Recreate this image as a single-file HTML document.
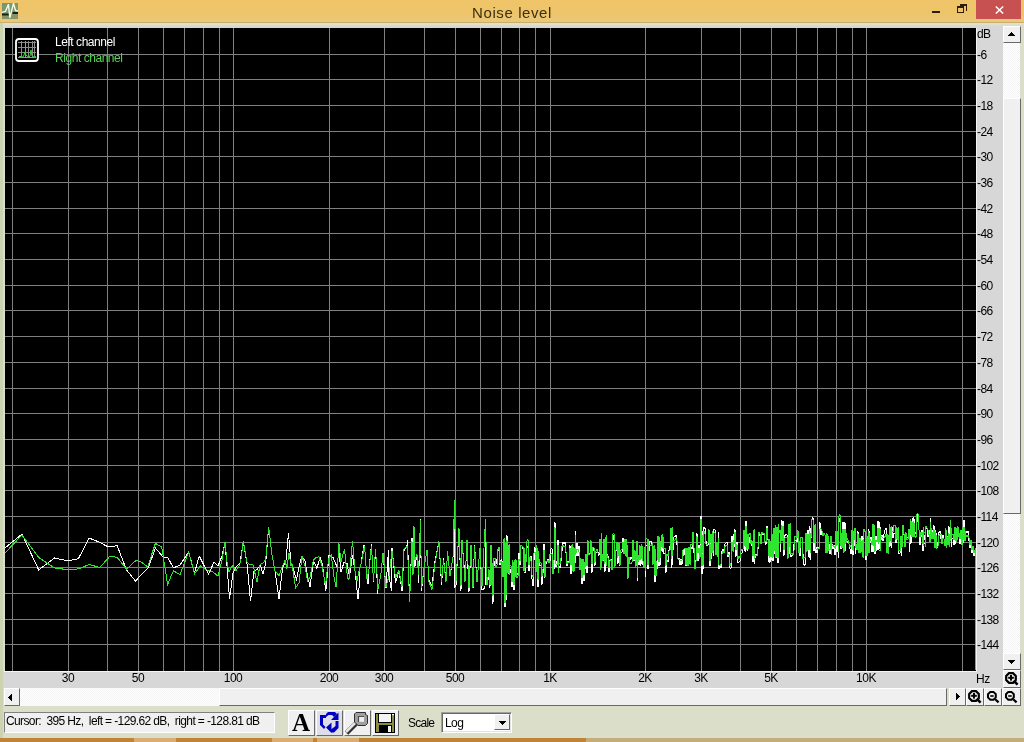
<!DOCTYPE html>
<html><head><meta charset="utf-8"><style>
html,body{margin:0;padding:0}
body{width:1024px;height:742px;overflow:hidden;position:relative;background:#dbdfca;font-family:"Liberation Sans",sans-serif;}
.abs{position:absolute}
.yl,.xl,.legend,#status,#ttext,.txt{will-change:transform}
#title{position:absolute;left:0;top:0;width:1024px;height:22px;background:linear-gradient(#f0c469,#eec46a 60%,#e9c97c)}
#ttext{position:absolute;left:0;width:1024px;top:4px;text-align:center;font-size:15px;letter-spacing:0.6px;color:#3a3010;line-height:17px}
#close{position:absolute;left:976px;top:0;width:45px;height:19px;background:#c75050}
#tline{position:absolute;left:0;top:22px;width:1024px;height:1px;background:#c6af6e}
#ctrl{position:absolute;left:3px;top:26px;width:1000px;height:662px;background:#d7d7d7}
.yl{position:absolute;left:977px;font-size:12px;line-height:12px;color:#000;white-space:nowrap;letter-spacing:-0.6px}
.xl{position:absolute;top:672px;width:60px;text-align:center;font-size:12px;line-height:12px;color:#000;letter-spacing:-0.5px}
.btn{position:absolute;box-sizing:border-box;background:#f0f0f0;border-style:solid;border-width:1px;border-color:#fff #696969 #696969 #fff}
.track{position:absolute;background-color:#f4f4f4;background-image:linear-gradient(45deg,#fff 25%,transparent 25%,transparent 75%,#fff 75%),linear-gradient(45deg,#fff 25%,transparent 25%,transparent 75%,#fff 75%);background-size:2px 2px;background-position:0 0,1px 1px}
.tri{position:absolute;width:0;height:0}
.legend{position:absolute;left:55px;font-size:12px;line-height:12px;white-space:nowrap;letter-spacing:-0.45px}
#status{position:absolute;left:4px;top:712px;width:271px;height:21px;box-sizing:border-box;background:#f0f0f0;border-style:solid;border-width:1px;border-color:#808080 #fff #fff #808080;font-size:12px;line-height:12px;white-space:pre;padding:2px 0 0 1px;color:#000;letter-spacing:-0.62px}
.tb{position:absolute;top:710px;width:27px;height:26px;box-sizing:border-box;background:#f0f0f0;border-style:solid;border-width:1px;border-color:#fff #696969 #696969 #fff}
</style></head><body>
<div id="title">
  <svg class="abs" style="left:2px;top:3px" width="16" height="16" viewBox="0 0 16 16">
    <rect x="0" y="0" width="16" height="16" fill="#7a9870"/>
    <rect x="0" y="11.5" width="16" height="4.5" fill="#8a946a"/>
    <rect x="0" y="10.5" width="7" height="2" fill="#142410"/>
    <rect x="10.5" y="9" width="5.5" height="2" fill="#142410"/>
    <polyline points="0,9.4 3.5,8.3 6.5,1.2 7.8,14.8 11.5,0.3 13.5,7.5 16,8" fill="none" stroke="#f4fbe8" stroke-width="1.4"/>
  </svg>
  <div id="ttext">Noise level</div>
  <div class="abs" style="left:932px;top:11px;width:8px;height:2px;background:#2a2008"></div>
  <div class="abs" style="left:957px;top:6px;width:7px;height:7px;box-sizing:border-box;border:1px solid #2a2008;border-top-width:2px"></div>
  <div class="abs" style="left:960px;top:4px;width:7px;height:7px;box-sizing:border-box;border-top:2px solid #2a2008;border-right:1px solid #2a2008"></div>
  <div id="close"><svg class="abs" style="left:19px;top:6px" width="9" height="8" viewBox="0 0 9 8"><path d="M0.8 0.5 L8.2 7.5 M8.2 0.5 L0.8 7.5" stroke="#fff" stroke-width="1.5"/></svg></div>
</div>
<div id="tline"></div>
<div class="abs" style="left:0;top:23px;width:1024px;height:1px;background:#ebe0b4"></div>
<div class="abs" style="left:0;top:24px;width:1024px;height:1px;background:#e2dec8"></div>
<div class="abs" style="left:0;top:25px;width:1024px;height:1px;background:#dad9d2"></div>
<div class="abs" style="left:0;top:23px;width:3px;height:715px;background:#cbd3b1"></div>
<div id="ctrl"></div>
<div class="abs" style="left:3px;top:26px;width:2px;height:646px;background:#dadfcc"></div>
<svg class="abs" style="left:0;top:0" width="1024" height="742">
  <rect x="5" y="28" width="971" height="643" fill="#000"/>
  <rect x="976" y="28" width="1" height="644" fill="#f4f4f4"/>
  <rect x="4" y="671" width="973" height="1" fill="#f4f4f4"/>
  <rect x="12" y="28" width="1" height="643" fill="#808080"/><rect x="68" y="28" width="1" height="643" fill="#808080"/><rect x="107" y="28" width="1" height="643" fill="#808080"/><rect x="138" y="28" width="1" height="643" fill="#808080"/><rect x="163" y="28" width="1" height="643" fill="#808080"/><rect x="184" y="28" width="1" height="643" fill="#808080"/><rect x="203" y="28" width="1" height="643" fill="#808080"/><rect x="219" y="28" width="1" height="643" fill="#808080"/><rect x="233" y="28" width="1" height="643" fill="#808080"/><rect x="329" y="28" width="1" height="643" fill="#808080"/><rect x="384" y="28" width="1" height="643" fill="#808080"/><rect x="424" y="28" width="1" height="643" fill="#808080"/><rect x="455" y="28" width="1" height="643" fill="#808080"/><rect x="480" y="28" width="1" height="643" fill="#808080"/><rect x="501" y="28" width="1" height="643" fill="#808080"/><rect x="519" y="28" width="1" height="643" fill="#808080"/><rect x="535" y="28" width="1" height="643" fill="#808080"/><rect x="550" y="28" width="1" height="643" fill="#808080"/><rect x="645" y="28" width="1" height="643" fill="#808080"/><rect x="701" y="28" width="1" height="643" fill="#808080"/><rect x="740" y="28" width="1" height="643" fill="#808080"/><rect x="771" y="28" width="1" height="643" fill="#808080"/><rect x="796" y="28" width="1" height="643" fill="#808080"/><rect x="817" y="28" width="1" height="643" fill="#808080"/><rect x="836" y="28" width="1" height="643" fill="#808080"/><rect x="852" y="28" width="1" height="643" fill="#808080"/><rect x="866" y="28" width="1" height="643" fill="#808080"/><rect x="962" y="28" width="1" height="643" fill="#808080"/><rect x="5" y="54" width="971" height="1" fill="#808080"/><rect x="5" y="79" width="971" height="1" fill="#808080"/><rect x="5" y="105" width="971" height="1" fill="#808080"/><rect x="5" y="131" width="971" height="1" fill="#808080"/><rect x="5" y="156" width="971" height="1" fill="#808080"/><rect x="5" y="182" width="971" height="1" fill="#808080"/><rect x="5" y="208" width="971" height="1" fill="#808080"/><rect x="5" y="233" width="971" height="1" fill="#808080"/><rect x="5" y="259" width="971" height="1" fill="#808080"/><rect x="5" y="285" width="971" height="1" fill="#808080"/><rect x="5" y="310" width="971" height="1" fill="#808080"/><rect x="5" y="336" width="971" height="1" fill="#808080"/><rect x="5" y="362" width="971" height="1" fill="#808080"/><rect x="5" y="388" width="971" height="1" fill="#808080"/><rect x="5" y="413" width="971" height="1" fill="#808080"/><rect x="5" y="439" width="971" height="1" fill="#808080"/><rect x="5" y="465" width="971" height="1" fill="#808080"/><rect x="5" y="490" width="971" height="1" fill="#808080"/><rect x="5" y="516" width="971" height="1" fill="#808080"/><rect x="5" y="542" width="971" height="1" fill="#808080"/><rect x="5" y="567" width="971" height="1" fill="#808080"/><rect x="5" y="593" width="971" height="1" fill="#808080"/><rect x="5" y="619" width="971" height="1" fill="#808080"/><rect x="5" y="644" width="971" height="1" fill="#808080"/>
  <polyline points="5,548 22,534 38.7,570 54.6,558 68,561 78.5,558.6 89,538 99,542 108.3,547 117.2,545.7 126.5,570 135.5,581 141,575 148.3,568 155.4,548 163,557 167.6,557 173.4,568 180,565 188.7,552 194.5,573 199.2,556 203.8,565 208.6,574 214,562 218,566 222,556 225,543 227,566 229.5,598.7 233,573 236,567 240,563 243.3,541.7 247,563.5 250.5,601 254,570.8 257,569.6 260.5,564.7 263,574.4 265.6,563.5 268.7,527 272,555 275,570.8 279,598.7 282.5,568.4 286,560 288.5,533.2 291,563.5 293,568.4 296.5,579.3 299.5,564.7 302,556.2 305,561 307.5,575.6 310,586.6 313.5,561 317,568.4 320,556.8 322.5,564.7 325.8,591.4 329,555 333,557.5 336.6,566 339,552.6 341,572 344,562.3 347,563.5 349.5,576.9 352.5,555 355,570.8 358,599 358.5,598.7 360,567 361,564 364,545 364.5,545.7 367,578.7 368,584 369,569.3 371.5,544.4 371.5,545.7 373.5,581.5 375.5,549 377.8,593.6 378,589.5 381,573.3 383,553.1 386,587.9 388.5,549.8 389,576 391.5,590.9 392,547.8 395.5,583.3 399,570.6 402,591.2 404,551.0 407,545 407.5,540.4 409.6,601.6 412,537.8 413,575 414,526 414,526 415,566.5 416,560 417,554.5 418.5,575 418.5,582.8 420.5,519.4 420.5,525.8 421.5,588 421.5,591 424,567.8 427,550 429,580.5 432,585.4 435,561.1 439,541.5 441.5,584.6 443.5,558.0 446,581.8 447.5,550.8 450,575.9 453,557 454.5,507.1 455,586.4 456,585.5 459,528.3 461,590.6 462,541.5 465,576.4 467,546.4 469,591.8 471,544.6 473,588 474.5,544.6 477,581.8 480,547.7 482,590.1 485,588 485.5,519 487,585 489,575.7 490,587.5 491,547.4 491,584.1 492,570.9 493,603.7 494,560.8 495,565.7 496,564.3 497,559.3 498,550.7 499,548.3 500,565.0 501,559.7 502,560.4 503,573.4 503,542.1 504,541.3 504,574.4 505,606.7 505,545.1 506,567.8 506,600.5 507,535.2 508,571.3 508,545.8 509,545.1 509,573.6 510,568.7 511,572.5 512,587.0 512,560.8 513,562.5 513,589.7 514,589.7 514,560.7 515,575.1 516,562.8 517,572.8 518,574.9 519,553.0 520,565.4 521,545.3 522,546.0 523,549.3 523,568.6 524,570.8 524,550.1 525,557.8 525,572.6 526,560.1 527,547.6 528,546.0 529,571.1 530,557.6 531,556.0 532,578.5 533,586.1 534,560.7 535,547.5 536,568.7 536,549.2 537,551.2 537,586.1 538,586.6 538,553.9 539,561.4 540,565.5 541,565.8 542,584.5 543,574.2 544,544.3 544,566.4 545,577.6 546,564.4 547,560.9 548,559.4 549,562.2 550,561.4 551,549.0 552,548.5 553,573.2 554,568.6 554,527.3 555,522.5 556,566.7 557,561.8 558,539.8 558,569.8 559,566.6 560,567.7 561,560.9 562,551.4 563,541.7 564,543.4 565,542.4 566,552.8 567,566.4 568,561.3 569,561.8 570,545.2 571,573.5 571,548.3 572,549.0 572,569.2 573,569.6 573,550.6 574,552.3 574,569.8 575,562.7 575,530.8 576,556.0 577,542.8 578,556.2 579,545.9 580,565.0 581,561.6 581,571.5 582,584.1 582,562.1 583,559.5 583,580.8 584,580.5 584,562.0 585,569.2 586,556.7 586,572.8 587,572.8 587,555.0 588,543.0 589,553.6 590,553.1 591,543.2 592,572.6 593,551.2 594,547.4 595,565.5 596,552.9 597,552.1 598,551.6 599,555.7 600,542.2 600,570.0 601,564.9 601,533.4 602,557.8 603,561.3 604,542.1 604,572.2 605,570.4 605,541.3 606,537.6 606,563.6 607,553.6 608,555.8 609,572.0 610,559.9 611,558.9 612,565.8 612,551.1 613,534.9 614,539.4 615,565.3 616,550.8 617,544.9 617,564.2 618,562.4 618,546.0 619,545.7 619,561.8 620,565.6 621,553.1 622,552.4 623,538.1 624,549.8 624,542.4 625,541.8 625,550.9 626,551.8 626,540.9 627,551.1 628,575.2 629,564.2 630,559.6 631,557.5 632,558.6 633,542.8 634,560.4 635,559.0 636,563.9 637,541.8 637,581.1 638,561.2 638,557.7 639,564.9 640,547.5 640,565.5 641,563.9 641,546.5 642,549.0 642,563.3 643,564.6 644,566.4 644,552.2 645,548.8 645,576.9 646,545.2 647,544.9 648,569.1 648,540.5 649,551.6 650,540.9 651,541.4 652,544.5 652,563.8 653,562.8 653,546.7 654,549.4 654,579.1 655,582.3 655,552.0 656,574.7 657,569.6 658,539.8 658,563.6 659,566.1 659,540.6 660,545.0 660,564.5 661,551.0 661,538.5 662,537.3 662,551.9 663,551.2 663,539.2 664,554.0 665,553.6 666,572.5 667,560.2 668,562.1 669,550.5 670,546.7 671,528.2 671,568.1 672,564.7 672,527.7 673,550.3 674,536.8 675,536.4 676,534.8 677,545.0 678,558.0 679,558.4 680,564.6 681,559.0 682,564.9 683,550.0 684,555.6 685,547.8 686,566.2 687,550.4 687,565.0 688,564.7 688,550.8 689,549.8 689,562.1 690,563.0 690,551.3 691,547.6 692,548.9 693,532.9 694,552.8 695,565.5 696,560.2 697,533.2 698,561.4 699,544.7 699,556.8 700,555.6 700,541.5 701,516.0 701,553.3 702,573.8 702,548.9 703,530.9 703,569.1 704,527.6 705,528.3 706,541.3 707,545.6 708,545.0 709,531.3 710,565.8 710,546.8 711,534.1 711,558.7 712,549.6 712,533.3 713,540.0 713,556.0 714,529.9 715,529.7 716,551.8 716,545.3 717,546.4 717,553.9 718,549.3 718,531.9 719,568.7 720,564.7 721,567.9 722,551.6 723,548.8 724,550.8 725,543.6 726,543.0 727,542.4 728,556.8 729,551.7 730,568.2 731,568.0 732,535.7 732,547.5 733,548.5 733,533.5 734,547.7 735,529.2 736,556.6 737,541.8 738,562.8 739,562.2 740,561.3 741,554.3 742,552.8 743,549.5 744,531.1 744,549.8 745,550.7 745,531.3 746,521.0 746,547.7 747,549.3 747,539.7 748,537.4 748,548.6 749,543.2 750,536.8 751,541.1 752,545.4 753,561.6 753,535.3 754,534.3 754,564.4 755,558.5 756,554.6 757,555.1 758,549.7 759,534.2 760,535.6 761,543.3 761,536.3 762,533.3 763,534.6 764,533.7 765,540.9 766,544.5 767,525.8 768,540.2 768,559.8 769,561.4 769,540.1 770,542.4 770,561.7 771,560.2 771,536.9 772,536.5 772,561.1 773,560.4 773,537.9 774,530.1 774,554.4 775,552.2 775,526.9 776,558.2 777,530.3 777,560.2 778,562.8 778,528.0 779,532.5 780,532.5 780,552.1 781,538.7 781,520.0 782,520.9 782,539.2 783,538.6 783,520.8 784,556.0 785,535.4 786,534.4 787,534.8 788,552.0 789,526.0 789,553.5 790,554.0 790,525.2 791,556.8 792,555.7 793,554.5 794,544.1 795,540.3 796,539.9 797,542.0 798,530.7 798,550.3 799,550.9 799,541.5 800,556.0 801,538.0 802,537.9 803,553.8 804,564.6 805,565.5 806,535.6 806,549.2 807,548.2 807,538.1 808,529.8 808,556.3 809,556.8 809,526.5 810,528.0 810,560.0 811,538.6 812,520.5 813,517.2 814,550.7 814,529.5 815,528.5 815,553.0 816,547.1 817,552.7 818,547.2 819,547.8 820,522.4 821,534.9 822,530.8 823,535.6 824,533.7 825,535.3 826,550.1 826,536.1 827,534.2 827,550.0 828,550.5 828,537.3 829,544.0 830,554.3 831,539.1 831,552.2 832,544.1 833,548.5 834,545.0 835,555.1 835,538.5 836,535.3 836,552.0 837,551.7 837,535.2 838,536.2 838,558.0 839,521.9 840,517.7 841,548.8 841,533.7 842,548.3 843,522.2 843,551.5 844,550.3 844,535.8 845,522.5 845,551.4 846,540.5 846,536.3 847,541.2 848,542.4 849,544.0 850,548.6 851,554.2 852,530.5 852,553.8 853,554.5 853,531.3 854,546.8 855,529.2 855,553.9 856,545.0 857,546.6 857,530.9 858,531.8 858,545.0 859,551.8 859,539.9 860,540.2 860,552.4 861,551.1 861,542.9 862,536.0 862,555.4 863,556.3 863,533.8 864,531.7 865,531.5 865,546.9 866,559.7 866,542.8 867,539.6 867,552.8 868,552.4 868,528.7 869,530.7 869,552.2 870,542.8 871,537.3 872,551.8 872,531.6 873,525.3 873,551.9 874,551.3 874,526.8 875,554.2 876,536.0 877,551.0 878,521.5 878,550.0 879,548.4 879,522.3 880,526.8 880,547.5 881,539.5 882,535.4 883,541.1 884,534.0 885,530.1 886,527.7 887,549.5 887,534.7 888,536.0 888,550.6 889,546.5 889,524.0 890,527.3 890,544.8 891,546.2 891,526.1 892,527.1 893,538.4 894,533.6 895,533.5 896,543.0 897,530.1 897,538.0 898,538.9 898,529.5 899,553.6 900,553.7 901,537.9 901,555.7 902,546.3 902,528.2 903,526.9 904,534.7 904,545.4 905,545.2 905,534.7 906,539.1 907,538.0 908,536.7 909,533.3 909,551.5 910,543.7 910,522.9 911,525.1 911,542.7 912,534.0 912,519.2 913,518.3 913,533.7 914,533.4 914,519.1 915,532.3 916,534.0 917,514.4 918,521.6 919,530.0 919,544.2 920,544.1 920,532.6 921,536.6 922,529.6 922,540.8 923,550.8 923,528.9 924,539.6 925,535.2 925,543.7 926,527.5 927,528.7 928,536.6 929,530.3 930,539.7 930,517.6 931,532.0 931,535.1 932,529.7 933,538.1 934,525.5 935,545.9 935,529.9 936,532.6 936,546.5 937,548.3 938,542.6 939,532.4 940,530.7 941,538.5 942,541.4 943,534.9 944,539.2 945,544.7 945,532.1 946,533.9 946,547.0 947,536.1 948,544.5 948,526.0 949,527.0 949,546.6 950,538.6 950,519.8 951,530.8 951,547.1 952,539.3 953,538.2 954,545.0 954,530.5 955,530.5 955,544.4 956,540.2 956,532.7 957,531.1 957,539.4 958,536.6 958,530.1 959,535.1 960,544.0 961,531.1 961,538.8 962,541.8 962,528.2 963,543.2 964,520.1 964,540.3 965,539.1 965,533.6 966,531.5 967,532.6 968,531.1 969,541 970,548 971,543 972,553 973,549 974,556 975,552" fill="none" stroke="#ffffff" stroke-width="1" shape-rendering="crispEdges"/>
<polyline points="5,553 22,535 38.7,557.4 54.6,568 70.3,570 80,568.5 89,564.4 99.6,567.5 110,556.2 117.2,557.4 126.5,569 136,560.5 141,562 147.6,566.8 155.4,543.4 161.7,547 167.6,584.4 173.4,570.8 180,574.5 188.7,552 194.5,573.8 200.4,566 207,570 213,572 218,576.2 222,560 225,542.3 227.4,566 229,572 233,564.7 236,570.8 240.5,563.5 243.3,541 247,562.3 250,564.7 253,564.7 257,582.3 260,564.7 263,563 265.6,560 268.7,527.1 272,555 275,570.8 279,575.6 282.5,566 285,560.5 287,568.4 289,552.6 291,566 292,563.5 295.5,587.8 299,583 302,556.2 305,566 307.5,581 310,576.9 313.5,560 316,557.5 319,556.8 322,566 325.5,585.4 328.6,558.7 331.4,555 333.7,575.6 336,587.2 339,543.5 341,561.7 344.5,549 347.5,578 349,579.3 352.5,541 355,570.8 357,580.5 360,567 361,564 364.5,545.7 367,578.7 369,569.3 371.5,545.7 373.5,581.4 375.5,549 378,589.5 381,573.3 383,553 386,586.8 389,576 392,551 395.5,577.4 399,570.6 402,586.8 404,549 407.5,546.4 409.6,601.6 412,541 413,575 414,526 415,560 417,554.5 418.5,575 420.5,519.6 421.5,588 424,567.8 427,550 429,581.8 432,589.5 435,563.2 439,541.5 441.5,581.8 443.5,560 446,581.8 447.5,550.8 450,575.6 453,557 454.5,500.4 456,581.8 459,528.3 461,586.4 462,540 465,581.8 467,540 469,588 471,544.6 473,588 474.5,546 477,581.8 480,547.7 482,586.4 485.5,519 487,585 489,569.4 490,584.7 491,545.1 491,584.8 492,562.5 493,596.4 494,558.3 495,558.0 496,566.9 497,565.6 498,549.5 499,547.0 500,562.7 501,561.4 502,562.1 503,576.9 503,540.1 504,539.3 504,577.9 505,603 505,542.6 506,566 506,595 507,540.1 508,572.9 508,545.7 509,545.0 509,575.2 510,565.5 511,565.9 512,581.9 512,560.1 513,561.7 513,584.6 514,584.6 514,560.0 515,577.1 516,559.4 517,578.4 518,576.3 519,559.0 520,561.3 521,545.1 522,545.8 523,546.8 523,569.1 524,571.3 524,547.7 525,553.9 525,567.6 526,562.1 527,540.8 528,539.2 529,565.3 530,556.6 531,561.3 532,575.2 533,577.3 534,552.8 535,551.9 536,572.4 536,545.6 537,547.8 537,578.4 538,579.0 538,550.5 539,559.3 540,562.8 541,563.0 542,576.6 543,569.1 544,550.1 544,567.9 545,577.4 546,561.2 547,561.5 548,560.0 549,562.8 550,554.3 551,554.0 552,553.5 553,574.0 554,559.8 554,534.0 555,527.1 556,564.0 557,565.0 558,544.6 558,572.9 559,563.1 560,564.2 561,558.1 562,546.4 563,545.3 564,546.9 565,546.0 566,551.7 567,563.6 568,562.1 569,562.7 570,547.6 571,564.7 571,546.2 572,545.2 572,570.6 573,571.0 573,546.8 574,548.4 574,571.2 575,554.6 575,534.7 576,552.6 577,548.8 578,549.5 579,552.0 580,569.9 581,558.5 581,566.7 582,577.9 582,561.9 583,559.3 583,574.6 584,574.3 584,561.8 585,567.0 586,553.8 586,565.1 587,565.1 587,552.0 588,540.4 589,555.2 590,554.6 591,540.4 592,563.9 593,547.3 594,547.6 595,562.6 596,551.0 597,548.8 598,553.0 599,553.0 600,539.0 600,570.1 601,567.7 601,532.5 602,553.6 603,560.8 604,539.3 604,564.0 605,562.1 605,538.4 606,536.9 606,565.9 607,555.4 608,557.6 609,568.1 610,560.7 611,559.7 612,569.7 612,550.2 613,533.7 614,533.4 615,566.6 616,550.0 617,542.4 617,558.0 618,556.2 618,543.5 619,543.2 619,555.6 620,565.2 621,549.8 622,549.1 623,541.8 624,553.6 624,540.3 625,539.6 625,554.8 626,555.7 626,538.8 627,544.3 628,578.6 629,556.8 630,563.4 631,563.3 632,562.4 633,539.6 634,560.4 635,550.5 636,566.7 637,540.9 637,578.0 638,561.9 638,554.7 639,560.5 640,545.5 640,560.3 641,558.6 641,544.5 642,545.8 642,556.2 643,561.1 644,567.7 644,550.4 645,547.4 645,571.0 646,539.0 647,538.7 648,565.2 648,539.4 649,545.6 650,545.0 651,545.6 652,544.2 652,564.7 653,563.7 653,546.4 654,546.0 654,571.9 655,575.1 655,548.6 656,576.1 657,560.7 658,535.8 658,559.0 659,561.5 659,536.6 660,541.4 660,557.5 661,547.3 661,536.6 662,535.4 662,548.2 663,547.5 663,537.3 664,548.4 665,548.1 666,565.5 667,554.3 668,556.1 669,551.0 670,550.4 671,527.9 671,559.2 672,555.8 672,527.4 673,542.6 674,540.5 675,540.0 676,538.4 677,541.0 678,559.0 679,559.3 680,560.0 681,561.2 682,560.4 683,550.0 684,549.0 685,547.7 686,565.3 687,548.0 687,566.0 688,565.7 688,548.3 689,547.8 689,562.6 690,563.5 690,549.3 691,543.8 692,545.0 693,531.7 694,547.5 695,568.7 696,561.9 697,536.5 698,553.0 699,547.7 699,558.4 700,557.3 700,544.5 701,519 701,555.0 702,565.5 702,553.6 703,534.6 703,565.1 704,531.1 705,534.0 706,543.8 707,544.5 708,543.8 709,529.5 710,560.6 710,543.5 711,533.6 711,550.7 712,553.1 712,530.8 713,536.6 713,550.9 714,532.8 715,532.5 716,555.2 716,542.3 717,543.4 717,557.3 718,553.2 718,537.6 719,564.8 720,566.2 721,564.0 722,554.4 723,551.6 724,552.8 725,546.4 726,545.0 727,545.2 728,554.4 729,554.7 730,565.6 731,563.4 732,542.1 732,549.9 733,550.9 733,539.9 734,543.9 735,531.8 736,550.0 737,544.4 738,559.3 739,556.5 740,557.8 741,550.9 742,549.3 743,549.7 744,529.7 744,545.2 745,546.1 745,529.9 746,526.3 746,544.6 747,549.4 747,536.6 748,534.4 748,548.8 749,534.4 750,533.4 751,543.8 752,540.5 753,556.1 753,531.5 754,530.5 754,558.9 755,555.1 756,555.4 757,555.9 758,547.6 759,532.2 760,533.6 761,544.1 761,533.1 762,532.5 763,533.9 764,533.0 765,541.9 766,541.9 767,527.7 768,539.3 768,554.6 769,556.1 769,539.1 770,541.5 770,556.4 771,556.7 771,535.4 772,534.9 772,557.6 773,556.9 773,536.4 774,527.8 774,551.2 775,549.1 775,524.6 776,558.2 777,527.4 777,553.0 778,557.7 778,524.1 779,532.9 780,530.2 780,544.4 781,540.6 781,525.6 782,526.5 782,541.1 783,540.5 783,526.4 784,550.2 785,538.0 786,537.0 787,537.4 788,558.7 789,524.1 789,546.2 790,546.7 790,523.4 791,554.2 792,553.2 793,555.3 794,550.8 795,536.4 796,536.5 797,538.1 798,530.5 798,543.5 799,553.0 799,540.5 800,548.4 801,537.0 802,537.0 803,558.8 804,557.2 805,558.1 806,532.9 806,551.9 807,550.9 807,535.4 808,534.6 808,549.0 809,549.4 809,531.3 810,532.8 810,552.7 811,537.6 812,519.5 813,519.4 814,542.7 814,526.3 815,525.3 815,545.0 816,549.1 817,550.3 818,548.6 819,549.2 820,529.1 821,528.8 822,530.8 823,535.5 824,533.5 825,535.2 826,552.7 826,535.4 827,533.5 827,552.6 828,550.7 828,536.2 829,550.0 830,549.8 831,536.2 831,554.5 832,545.7 833,545.1 834,546.5 835,547.4 835,537.4 836,531.5 836,545.3 837,545.0 837,531.4 838,535.5 838,552.2 839,515.8 840,514.4 841,545.7 841,533.1 842,548.0 843,529.1 843,553.0 844,551.9 844,533.4 845,529.1 845,544.2 846,542.0 846,532.6 847,538.2 848,539.5 849,544.2 850,546.5 851,545.2 852,530.3 852,549.1 853,549.7 853,531.1 854,540.6 855,528.4 855,547.6 856,544.4 857,549.8 857,533.5 858,534.3 858,548.2 859,552.6 859,538.2 860,538.4 860,553.3 861,551.9 861,541.2 862,540.9 862,555.7 863,556.5 863,538.7 864,528.6 865,531.4 865,548.0 866,556.1 866,539.8 867,538.2 867,556.3 868,553.3 868,531.1 869,533.0 869,553.0 870,539.7 871,540.5 872,545.3 872,528.4 873,523.8 873,545.7 874,545.1 874,525.4 875,551.6 876,539.8 877,542.2 878,528.0 878,543.7 879,542.1 879,528.8 880,529.1 880,550.6 881,536.6 882,536.9 883,538.2 884,538.3 885,536.5 886,534.0 887,553.0 887,534.2 888,535.5 888,554.1 889,541.5 889,523.7 890,527.0 890,539.7 891,541.2 891,525.9 892,530.9 893,531.8 894,525.1 895,525.0 896,539.6 897,527.5 897,538.5 898,539.4 898,526.9 899,550.8 900,550.9 901,535.6 901,547.7 902,546.5 902,527.1 903,524.9 904,533.8 904,546.4 905,546.2 905,533.8 906,532.7 907,540.3 908,538.9 909,529.5 909,542.8 910,535.0 910,519.1 911,521.3 911,534.0 912,536.8 912,523.4 913,522.5 913,536.5 914,536.3 914,523.4 915,535.8 916,537.4 917,514.1 918,513.3 919,529.7 919,536.3 920,536.3 920,532.3 921,535.0 922,532.2 922,542.4 923,544.2 923,527.5 924,533.3 925,532.1 925,547.0 926,526.4 927,527.7 928,529.9 929,534.4 930,541.6 930,522.0 931,528.5 931,538.6 932,532.1 933,539.4 934,529.4 935,548.3 935,532.0 936,534.7 936,549.0 937,546.1 938,546.0 939,535.6 940,533.9 941,534.3 942,544.2 943,537.7 944,538.8 945,545.6 945,528.2 946,530.1 946,547.9 947,536.9 948,545.2 948,532.7 949,533.8 949,547.3 950,540.5 950,519.5 951,527.9 951,538.6 952,534.9 953,533.8 954,540.4 954,527.0 955,527.0 955,539.8 956,540.6 956,529.6 957,527.9 957,539.8 958,537.0 958,527.0 959,532.9 960,538.9 961,529.7 961,541.8 962,544.8 962,526.8 963,539.9 964,526.7 964,536.9 965,540.7 965,531.1 966,535.3 967,536.4 968,534.9 969,538 970,545 971,540 972,550 973,546 974,553 975.5,548 975.5,670" fill="none" stroke="#2ee62e" stroke-width="1" shape-rendering="crispEdges"/>
  <!-- legend icon -->
  <rect x="16" y="39" width="22" height="22" rx="3" fill="#000" stroke="#fff" stroke-width="1.8"/>
  <g fill="#8c8c8c">
    <rect x="18" y="42" width="18" height="1"/><rect x="18" y="47" width="18" height="1"/><rect x="18" y="52" width="18" height="1"/>
    <rect x="21" y="41" width="1" height="17"/><rect x="28" y="41" width="1" height="17"/><rect x="32" y="41" width="1" height="17"/><rect x="34" y="41" width="1" height="17"/>
  </g>
  <rect x="25" y="41" width="1" height="17" fill="#4ed04e"/>
  <polyline points="18.5,57.5 20,56 21,57 23,57 24,55 25,52 26,55 27,56 29,57 30,56 31,50 32,56 33,57 35,56 36,57.5" fill="none" stroke="#3cd03c" stroke-width="1"/>
  <rect x="18" y="57" width="18" height="1" fill="#3cd03c"/>
</svg>
<div class="legend" style="top:35.5px;color:#fff">Left channel</div>
<div class="legend" style="top:51.5px;color:#56d656">Right channel</div>
<div class="yl" style="top:28px">dB</div><div class="yl" style="top:48.5px">-6</div><div class="yl" style="top:73.5px">-12</div><div class="yl" style="top:99.5px">-18</div><div class="yl" style="top:125.5px">-24</div><div class="yl" style="top:150.5px">-30</div><div class="yl" style="top:176.5px">-36</div><div class="yl" style="top:202.5px">-42</div><div class="yl" style="top:227.5px">-48</div><div class="yl" style="top:253.5px">-54</div><div class="yl" style="top:279.5px">-60</div><div class="yl" style="top:304.5px">-66</div><div class="yl" style="top:330.5px">-72</div><div class="yl" style="top:356.5px">-78</div><div class="yl" style="top:382.5px">-84</div><div class="yl" style="top:407.5px">-90</div><div class="yl" style="top:433.5px">-96</div><div class="yl" style="top:459.5px">-102</div><div class="yl" style="top:484.5px">-108</div><div class="yl" style="top:510.5px">-114</div><div class="yl" style="top:536.5px">-120</div><div class="yl" style="top:561.5px">-126</div><div class="yl" style="top:587.5px">-132</div><div class="yl" style="top:613.5px">-138</div><div class="yl" style="top:638.5px">-144</div>
<div class="xl" style="left:38.20px">30</div><div class="xl" style="left:108.20px">50</div><div class="xl" style="left:203.20px">100</div><div class="xl" style="left:299.20px">200</div><div class="xl" style="left:354.20px">300</div><div class="xl" style="left:425.20px">500</div><div class="xl" style="left:520.20px">1K</div><div class="xl" style="left:615.20px">2K</div><div class="xl" style="left:671.20px">3K</div><div class="xl" style="left:741.20px">5K</div><div class="xl" style="left:836.20px">10K</div>
<div class="abs txt" style="left:976px;top:673px;font-size:12px;line-height:12px;letter-spacing:-0.4px">Hz</div>
<!-- vertical scrollbar -->
<div class="track" style="left:1003px;top:43px;width:17px;height:610px"></div>
<div class="btn" style="left:1003px;top:26px;width:18px;height:17px"></div>
<div class="btn" style="left:1003px;top:98px;width:18px;height:416px"></div>
<div class="btn" style="left:1003px;top:653px;width:18px;height:17px"></div>
<div class="btn" style="left:1003px;top:670px;width:18px;height:18px"><svg class="abs" style="left:0;top:0" width="17" height="17" viewBox="0 0 17 17"><path d="M5 2.2 H9 L11.8 5 V9 L9 11.8 H5 L2.2 9 V5 Z" fill="none" stroke="#000" stroke-width="2.2"/><g fill="#000"><rect x="4.2" y="5.8" width="5.6" height="2"/><rect x="6" y="4" width="2" height="5.6"/></g><path d="M10.5 10.5 L13.6 13.6" stroke="#000" stroke-width="2.5"/></svg></div>
<!-- horizontal scrollbar -->
<div class="track" style="left:4px;top:688px;width:943px;height:18px"></div>
<div class="btn" style="left:4px;top:688px;width:16px;height:18px"></div>
<div class="btn" style="left:219px;top:688px;width:728px;height:18px"></div>
<div class="btn" style="left:949px;top:688px;width:17px;height:18px"></div>
<div class="btn" style="left:966px;top:688px;width:18px;height:18px"><svg class="abs" style="left:0;top:0" width="17" height="17" viewBox="0 0 17 17"><path d="M5 2.2 H9 L11.8 5 V9 L9 11.8 H5 L2.2 9 V5 Z" fill="none" stroke="#000" stroke-width="2.2"/><g fill="#000"><rect x="4.2" y="5.8" width="5.6" height="2"/><rect x="6" y="4" width="2" height="5.6"/></g><path d="M10.5 10.5 L13.6 13.6" stroke="#000" stroke-width="2.5"/></svg></div>
<div class="btn" style="left:984px;top:688px;width:18px;height:18px"><svg class="abs" style="left:0;top:0" width="17" height="17" viewBox="0 0 17 17"><path d="M5.3 2.9 H8.5 L10.8 5.2 V8.4 L8.5 10.7 H5.3 L3 8.4 V5.2 Z" fill="none" stroke="#000" stroke-width="2"/><rect x="5.2" y="6.2" width="3.5" height="1.6" fill="#000"/><path d="M10.2 10.2 L13.6 13.4" stroke="#000" stroke-width="2.2"/></svg></div>
<div class="btn" style="left:1002px;top:688px;width:19px;height:18px"><svg class="abs" style="left:0;top:0" width="17" height="17" viewBox="0 0 17 17"><path d="M5.3 2.9 H8.5 L10.8 5.2 V8.4 L8.5 10.7 H5.3 L3 8.4 V5.2 Z" fill="none" stroke="#000" stroke-width="2"/><rect x="5.2" y="6.2" width="3.5" height="1.6" fill="#000"/><path d="M10.2 10.2 L13.6 13.4" stroke="#000" stroke-width="2.2"/></svg></div>
<!-- status -->
<div id="status">Cursor:  395 Hz,  left = -129.62 dB,  right = -128.81 dB</div>
<div class="tb" style="left:288px"></div>
<div class="tb" style="left:316px;background:#dedee8"></div>
<div class="tb" style="left:344px"></div>
<div class="tb" style="left:372px"></div>
<div class="abs txt" style="left:292px;top:710px;font-family:'Liberation Serif',serif;font-weight:bold;font-size:25px;line-height:25px;color:#000">A</div>
<svg class="abs" style="left:0;top:0" width="1024" height="742">
  <g fill="#0000c0">
    <polygon points="326,717 326,714 328,712 335,712 337,714 334,717 332,715 328.5,715"/>
    <polygon points="331,720 338.5,712.5 338.5,720"/>
    <polygon points="320,715 326,715 326,718 323,718 323,724.5 325.5,727 324,729 320,725"/>
    <polygon points="335.5,721 338.5,721 338.5,728 334,732.5 331,732.5 331,729.5 335.5,726"/>
    <polygon points="326,727.5 331.5,722.5 331.5,733"/>
  </g>
  <path d="M346.5 733 L357 722.5" stroke="#303030" stroke-width="5"/>
  <path d="M346 732 L356 722" stroke="#e4e4e4" stroke-width="2.6"/>
  <polygon points="354.5,714 356,712.5 365.5,712.5 365.5,714.5 367.5,715.5 367.5,723.5 365.5,725.5 358,725.5 354.5,722" fill="#a0a0a0" stroke="#303030" stroke-width="1"/>
  <rect x="358.5" y="716.5" width="5.5" height="5.3" fill="#f0f0f0"/>
  <path d="M358.5 722 V716.5 H364" stroke="#505050" stroke-width="1.2" fill="none"/>
  <rect x="375.5" y="713.5" width="19" height="19" fill="#8c8c3c" stroke="#000" stroke-width="1"/>
  <rect x="378.5" y="713.5" width="13" height="9" fill="#f4f4f4" stroke="#000" stroke-width="1"/>
  <rect x="392" y="714" width="2" height="1.2" fill="#fff"/>
  <rect x="379" y="725" width="13" height="8" fill="#000"/>
  <rect x="388" y="726" width="3" height="6" fill="#f4f4f4"/>
</svg>
<div class="abs txt" style="left:408px;top:717px;font-size:12px;line-height:12px;color:#000;letter-spacing:-0.75px">Scale</div>
<div class="abs" style="left:441px;top:712px;width:71px;height:21px;box-sizing:border-box;background:#fff;border-style:solid;border-width:1px;border-color:#a0a0a0 #fff #fff #a0a0a0;box-shadow:inset 1px 1px 0 #696969, inset -1px -1px 0 #e3e3e3"></div>
<div class="abs txt" style="left:445px;top:717px;font-size:12px;line-height:12px;color:#000;letter-spacing:-0.6px">Log</div>
<div class="btn" style="left:494px;top:714px;width:16px;height:16px"></div>
<svg class="abs" style="left:0;top:0" width="1024" height="742"><g fill="#000" shape-rendering="crispEdges"><rect x="1011" y="32" width="1" height="1"/><rect x="1010" y="33" width="3" height="1"/><rect x="1009" y="34" width="5" height="1"/><rect x="1008" y="35" width="7" height="1"/><rect x="1008" y="660" width="7" height="1"/><rect x="1009" y="661" width="5" height="1"/><rect x="1010" y="662" width="3" height="1"/><rect x="1011" y="663" width="1" height="1"/><rect x="8" y="697" width="1" height="1"/><rect x="9" y="696" width="1" height="3"/><rect x="10" y="695" width="1" height="5"/><rect x="11" y="694" width="1" height="7"/><rect x="956" y="693" width="1" height="7"/><rect x="957" y="694" width="1" height="5"/><rect x="958" y="695" width="1" height="3"/><rect x="959" y="696" width="1" height="1"/><rect x="499" y="721" width="7" height="1"/><rect x="500" y="722" width="5" height="1"/><rect x="501" y="723" width="3" height="1"/><rect x="502" y="724" width="1" height="1"/></g></svg>
<!-- taskbar strip -->
<div class="abs" style="left:0;top:738px;width:1024px;height:4px;background:#c4ad7c"></div>
<div class="abs" style="left:0;top:738px;width:586px;height:4px;background:#bf8436"></div>
<div class="abs" style="left:134px;top:738px;width:42px;height:4px;background:#d9ae76"></div>
<div class="abs" style="left:272px;top:738px;width:41px;height:4px;background:#d9ae76"></div>
<div class="abs" style="left:317px;top:738px;width:42px;height:4px;background:#d9ae76"></div>
</body></html>
